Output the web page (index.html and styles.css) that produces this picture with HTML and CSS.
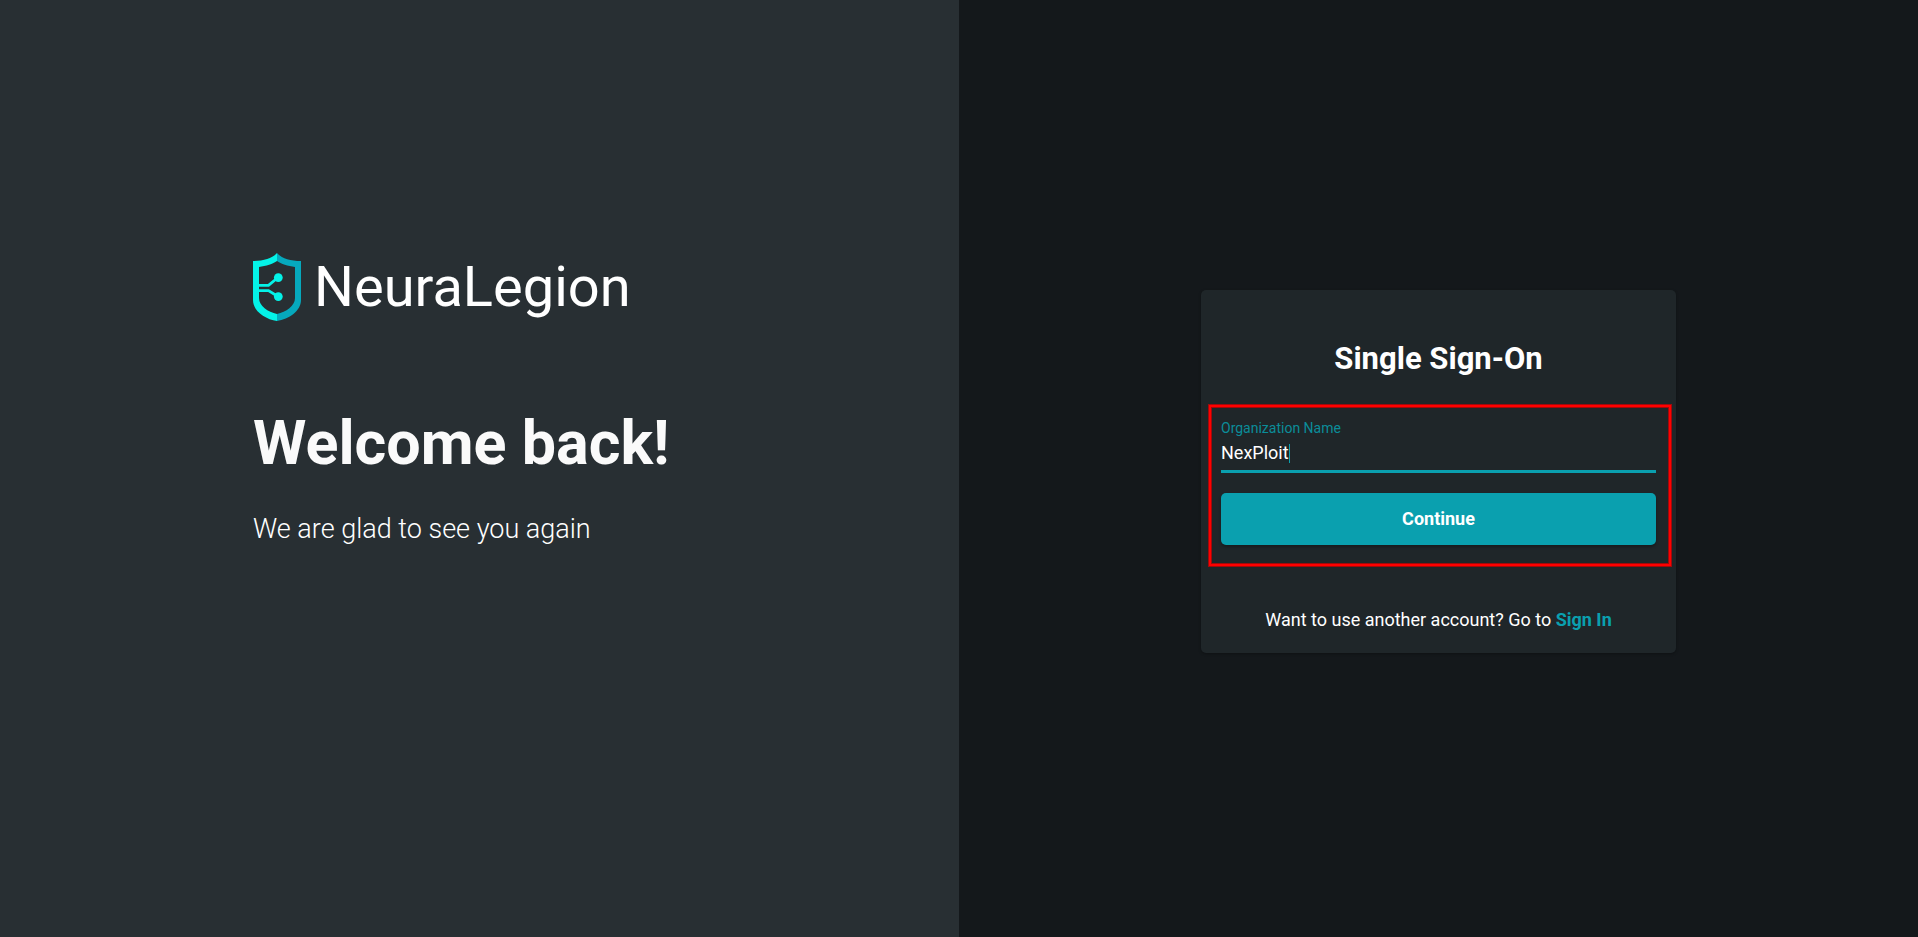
FILE: index.html
```html
<!DOCTYPE html>
<html lang="en">
<head>
<meta charset="utf-8">
<title>NeuraLegion – Single Sign-On</title>
<meta name="viewport" content="width=device-width, initial-scale=1">
<link rel="stylesheet" href="styles.css">
</head>
<body>
<main class="page">
  <section class="intro">
    <div class="brand">
      <svg class="brand-mark" viewBox="0 0 48 68" aria-hidden="true">
        <path fill="#04f3e8" d="M24 0C20 5 11 8 0 8V47C0 58 12 66 24 68V61C15 59 6 53 6 45V14C13 13 20 11 24 8Z"/>
        <path fill="#06a9bd" d="M24 0C28 5 37 8 48 8V47C48 58 36 66 24 68V61C33 59 42 53 42 45V14C35 13 28 11 24 8Z"/>
        <path fill="none" stroke="#04f3e8" stroke-width="2.800" d="M5 32.400H15.500L25 24.500M5 37.600H15.500L25 43.500"/>
        <circle cx="25.300" cy="24.600" r="4.400" fill="#04f3e8"/>
        <circle cx="25.300" cy="43.600" r="4.400" fill="#04f3e8"/>
      </svg>
      <span class="brand-name">NeuraLegion</span>
    </div>
    <h1 class="welcome">Welcome back!</h1>
    <p class="tagline">We are glad to see you again</p>
  </section>
  <section class="auth">
    <div class="card">
      <h2 class="card-title">Single Sign-On</h2>
      <form class="form">
        <label class="label" for="organization">Organization Name</label>
        <div class="field">
          <input class="input" id="organization" type="text" value="NexPloit" size="8" autocomplete="off">
          <span class="caret"></span>
        </div>
        <button class="button" type="button">Continue</button>
      </form>
      <p class="switch">Want to use another account? Go to <a class="link" href="#">Sign In</a></p>
    </div>
  </section>
</main>
</body>
</html>
```
FILE: styles.css
```css
* {
  box-sizing: border-box;
}

body {
  margin: 0;
  font-family: Roboto, "Liberation Sans", sans-serif;
  color: #fff;
  background: #14181b;
}

.page {
  display: grid;
  grid-template-columns: 1fr 1fr;
  min-height: 100vh;
}

.intro {
  display: flex;
  flex-direction: column;
  justify-content: center;
  padding: 0 24px 140px 253px;
  background: #282f33;
}

.brand {
  display: flex;
  align-items: center;
  gap: 13px;
}

.brand-mark {
  width: 48px;
  height: 68px;
  flex: none;
}

.brand-name {
  font-size: 56px;
  line-height: 68px;
}

.welcome {
  margin: 84px 0 0;
  font-size: 61px;
  line-height: 76px;
  font-weight: 700;
  color: #fafafa;
}

.tagline {
  margin: 32px 0 0;
  font-size: 27px;
  line-height: 32px;
  font-weight: 300;
}

.auth {
  display: flex;
  align-items: center;
  justify-content: center;
  padding: 6px 24px 0;
}

.card {
  width: 100%;
  max-width: 475px;
  padding: 49px 20px 21px;
  border-radius: 5px;
  background: #1f2629;
  box-shadow: 0 1px 3px rgba(0, 0, 0, 0.3);
}

.card-title {
  margin: 0 0 37px;
  font-size: 31px;
  line-height: 40px;
  font-weight: 700;
  text-align: center;
}

.form {
  position: relative;
}

/* Highlight frame around the form controls */
.form::after {
  content: "";
  position: absolute;
  inset: -11px -15px -21px -12px;
  border: 2px solid #f00;
  box-shadow: 0 0 0 1px #a00a0b, inset 0 0 0 1px #a00a0b;
  pointer-events: none;
}

.label {
  display: block;
  font-size: 14px;
  line-height: 24px;
  color: #0b8d99;
}

.field {
  display: flex;
  align-items: center;
  height: 33px;
  padding-bottom: 4px;
  border-bottom: 3px solid #0aa0af;
}

.input {
  field-sizing: content;
  padding: 0;
  border: 0;
  outline: 0;
  background: transparent;
  color: #fff;
  font: 400 18px/24px Roboto, "Liberation Sans", sans-serif;
  caret-color: transparent;
}

.caret {
  width: 1px;
  height: 19px;
  background: #0aa0af;
}

.button {
  display: block;
  width: 100%;
  height: 52px;
  margin-top: 20px;
  border: 0;
  border-radius: 5px;
  background: #0aa0af;
  color: #fff;
  font: 700 18px/24px Roboto, "Liberation Sans", sans-serif;
  box-shadow: 0 2px 3px rgba(0, 0, 0, 0.3);
}

.switch {
  margin: 63px 0 0;
  font-size: 18px;
  line-height: 24px;
  text-align: center;
}

.link {
  color: #0aa0af;
  font-weight: 700;
  text-decoration: none;
}
```
